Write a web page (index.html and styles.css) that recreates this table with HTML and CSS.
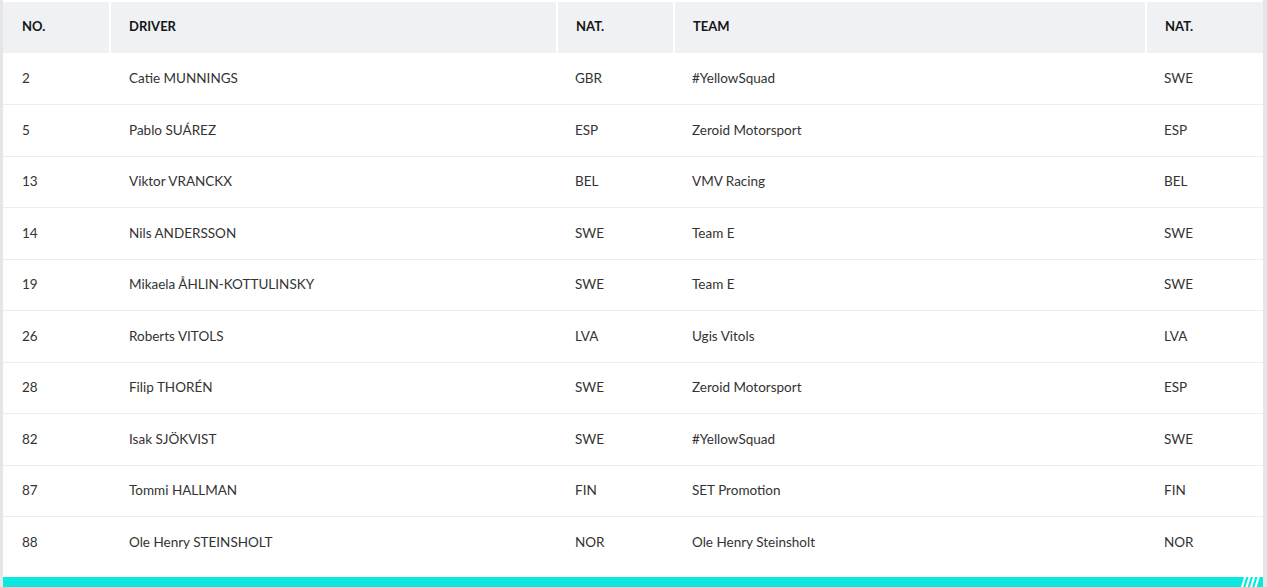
FILE: index.html
```html
<!DOCTYPE html>
<html lang="en">
<head>
<meta charset="utf-8">
<title>Entry list</title>
<link rel="stylesheet" href="styles.css">
</head>
<body>
<div class="page">
  <table class="entries">
    <colgroup>
      <col class="c-no"><col class="c-driver"><col class="c-nat"><col class="c-team"><col class="c-nat2">
    </colgroup>
    <thead>
      <tr><th>NO.</th><th>DRIVER</th><th>NAT.</th><th>TEAM</th><th>NAT.</th></tr>
    </thead>
    <tbody>
      <tr><td>2</td><td>Catie MUNNINGS</td><td>GBR</td><td>#YellowSquad</td><td>SWE</td></tr>
      <tr><td>5</td><td>Pablo SUÁREZ</td><td>ESP</td><td>Zeroid Motorsport</td><td>ESP</td></tr>
      <tr><td>13</td><td>Viktor VRANCKX</td><td>BEL</td><td>VMV Racing</td><td>BEL</td></tr>
      <tr><td>14</td><td>Nils ANDERSSON</td><td>SWE</td><td>Team E</td><td>SWE</td></tr>
      <tr><td>19</td><td>Mikaela ÅHLIN-KOTTULINSKY</td><td>SWE</td><td>Team E</td><td>SWE</td></tr>
      <tr><td>26</td><td>Roberts VITOLS</td><td>LVA</td><td>Ugis Vitols</td><td>LVA</td></tr>
      <tr><td>28</td><td>Filip THORÉN</td><td>SWE</td><td>Zeroid Motorsport</td><td>ESP</td></tr>
      <tr><td>82</td><td>Isak SJÖKVIST</td><td>SWE</td><td>#YellowSquad</td><td>SWE</td></tr>
      <tr><td>87</td><td>Tommi HALLMAN</td><td>FIN</td><td>SET Promotion</td><td>FIN</td></tr>
      <tr class="last"><td>88</td><td>Ole Henry STEINSHOLT</td><td>NOR</td><td>Ole Henry Steinsholt</td><td>NOR</td></tr>
    </tbody>
  </table>
  <div class="bar">
    <svg class="slashes" width="20" height="10" viewBox="0 0 20 10" aria-hidden="true">
      <polygon points="3,0 5.2,0 2.2,10 0,10" fill="#fff"/>
      <polygon points="7.5,0 9.7,0 6.7,10 4.5,10" fill="#fff"/>
      <polygon points="12,0 14.2,0 11.2,10 9,10" fill="#fff"/>
      <polygon points="16.5,0 18.7,0 15.7,10 13.5,10" fill="#fff"/>
    </svg>
  </div>
</div>
</body>
</html>
```
FILE: styles.css
```css
html, body {
  margin: 0;
  padding: 0;
}
body {
  background: #e6e6e6;
  font-family: Lato, "Noto Sans", "Liberation Sans", sans-serif;
  height: 587px;
  overflow: hidden;
}
.page {
  margin-left: 3px;
  width: 1260px;
  background: #fff;
  padding-top: 2px;
  box-sizing: border-box;
  height: 587px;
  display: flex;
  flex-direction: column;
}
.entries {
  width: 100%;
  border-collapse: collapse;
  table-layout: fixed;
}
.c-no { width: 107px; }
.c-driver { width: 447px; }
.c-nat { width: 117px; }
.c-team { width: 472px; }
.c-nat2 { width: 117px; }

.entries th {
  background: #f0f1f4;
  height: 51px;
  padding: 0 0 4px 19px;
  text-align: left;
  font-weight: 700;
  font-size: 13px;
  color: #151515;
  border-left: 2px solid #fff;
  box-sizing: border-box;
}
.entries th:first-child { border-left: none; }
.entries td {
  height: 51.5px;
  padding: 0 0 1px 19px;
  font-size: 13.5px;
  color: #333;
  border-bottom: 1px solid #ededed;
  box-sizing: border-box;
}
.entries td:nth-child(n+2), .entries th:nth-child(n+2) { padding-left: 18px; }
.entries td:nth-child(2) { padding-left: 19px; }
.entries tr.last td { border-bottom: none; }

.bar {
  margin-top: auto;
  height: 10px;
  background: #0ce8e0;
  display: flex;
  justify-content: flex-end;
  padding-right: 2px;
}
.slashes { display: block; }
```
